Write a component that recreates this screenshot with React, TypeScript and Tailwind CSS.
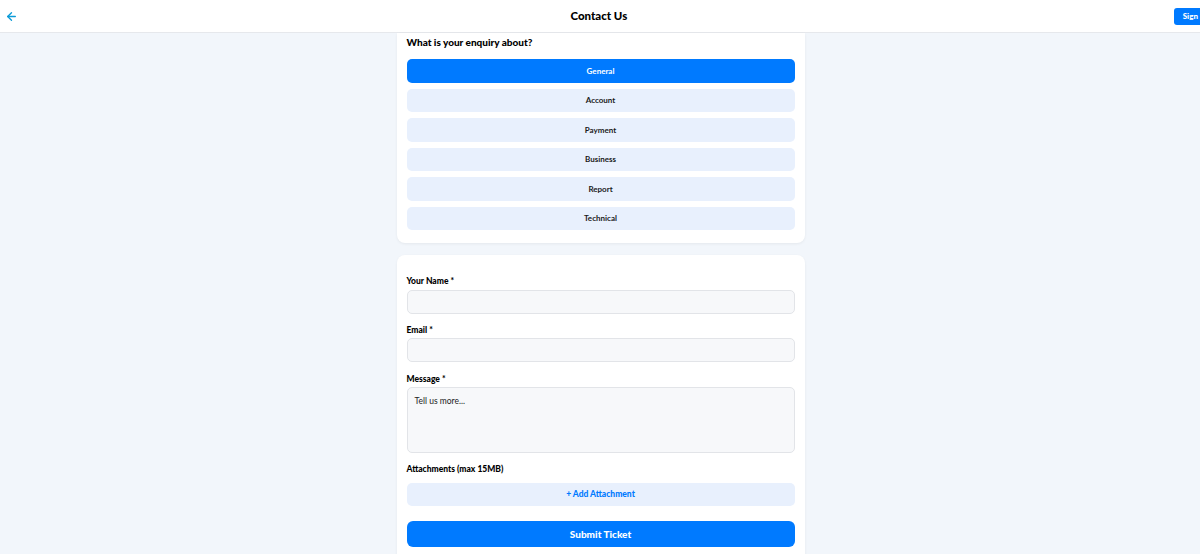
import React from "react";
import { ArrowLeft } from "lucide-react";

const topics = ["General", "Account", "Payment", "Business", "Report", "Technical"];

export default function App() {
  return (
    <div className="h-[554px] w-[1200px] overflow-hidden bg-[#f2f6fb] font-['Lato',sans-serif] text-black">
      <header className="flex h-[33px] items-center justify-between overflow-hidden border-b border-[#e6e8ec] bg-white pl-[5px]">
        <ArrowLeft className="h-[13px] w-[13px] text-[#0b9bd8]" strokeWidth={2.5} />
        <h1 className="ml-[6px] text-[11.5px] font-black">Contact Us</h1>
        <button className="-mr-[15px] flex h-[17px] items-center rounded-[3px] bg-[#007aff] pl-[9px] pr-[17px] text-[8px] font-black text-white">
          Sign
        </button>
      </header>
      <main className="flex flex-col items-center gap-[12px]">
        <section className="ml-[1px] w-[408px] rounded-b-[8px] bg-white px-[10px] pb-[13px] pt-[2px] shadow-[0_1px_3px_rgba(0,0,0,0.06)]">
          <h2 className="text-[10px] font-black leading-[14px]">What is your enquiry about?</h2>
          <div className="mt-[10px] flex flex-col gap-[6px]">
            {topics.map((t, i) => (
              <button
                key={t}
                className={
                  i === 0
                    ? "flex h-[23.5px] items-center justify-center rounded-[5px] bg-[#007aff] text-[8px] font-bold text-white"
                    : "flex h-[23.5px] items-center justify-center rounded-[5px] bg-[#e8f0fd] text-[8px] font-bold text-[#1a1a1a]"
                }
              >
                {t}
              </button>
            ))}
          </div>
        </section>
        <section className="ml-[1px] w-[408px] rounded-[8px] bg-white px-[10px] pb-[20px] pt-[20px] shadow-[0_1px_3px_rgba(0,0,0,0.06)]">
          <label className="block text-[8.5px] font-black leading-[12px]">Your Name *</label>
          <div className="mt-[3px] h-[24px] rounded-[5px] border border-[#e2e4e8] bg-[#f7f8fa]" />
          <label className="mt-[10px] block text-[8.5px] font-black leading-[12px]">Email *</label>
          <div className="mt-[2px] h-[24px] rounded-[5px] border border-[#e2e4e8] bg-[#f7f8fa]" />
          <label className="mt-[11px] block text-[8.5px] font-black leading-[12px]">Message *</label>
          <div className="mt-[2px] h-[66px] rounded-[5px] border border-[#e2e4e8] bg-[#f7f8fa] px-[7px] pt-[7px] text-[8.5px] leading-[12px] text-[#222]">
            Tell us more...
          </div>
          <label className="mt-[10px] block text-[8.5px] font-black leading-[12px]">Attachments (max 15MB)</label>
          <button className="mt-[8px] flex h-[23px] w-full items-center justify-center rounded-[5px] bg-[#e8f0fd] text-[8.5px] font-black text-[#007aff]">
            + Add Attachment
          </button>
          <button className="mt-[15px] flex h-[26px] w-full items-center justify-center rounded-[6px] bg-[#007aff] text-[10px] font-black text-white">
            Submit Ticket
          </button>
        </section>
      </main>
    </div>
  );
}
